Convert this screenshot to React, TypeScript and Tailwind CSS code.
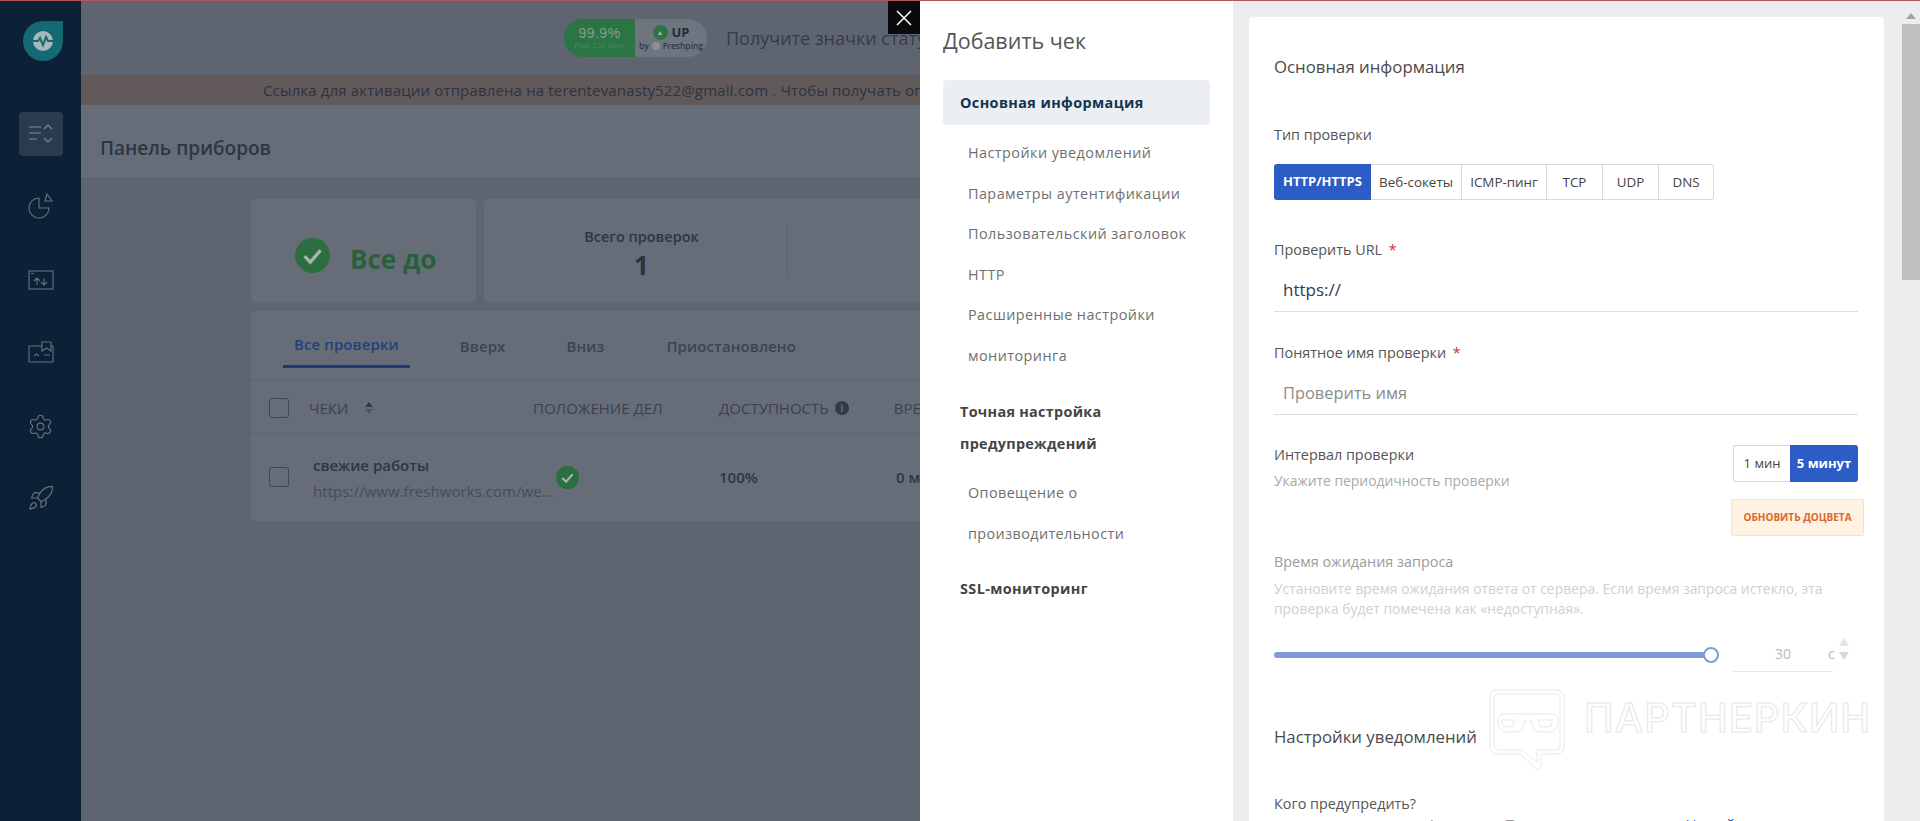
import { Rocket, Settings } from "lucide-react";

const navItems = [
  "Настройки уведомлений",
  "Параметры аутентификации",
  "Пользовательский заголовок",
  "HTTP",
];

const checkTypes = [
  { label: "Веб-сокеты", width: "w-[91px]" },
  { label: "ICMP-пинг", width: "w-[85px]" },
  { label: "TCP", width: "w-[56px]" },
  { label: "UDP", width: "w-[56px]" },
  { label: "DNS", width: "w-[55px]" },
];

const CheckMark = ({ size }: { size: number }) => (
  <svg width={size} height={size} viewBox="0 0 24 24">
    <circle cx="12" cy="12" r="12" fill="#2b6f40" />
    <path d="M6.5 12.5l4 4 7-8" fill="none" stroke="#a9b3b5" strokeWidth="2.2" />
  </svg>
);

const Sidebar = () => (
  <div className="flex h-full w-[81px] shrink-0 flex-col items-center bg-[#0d2136]">
    <div className="mt-[20px] ml-[5px] flex h-[40px] w-[40px] items-center justify-center rounded-full rounded-tr-[6px] bg-[#136a73]">
      <svg width="22" height="22" viewBox="0 0 22 22">
        <circle cx="11" cy="11" r="10" fill="#a9b6bc" />
        <path d="M0 11h6l2-3 3 7 3-8 2 4h6" fill="none" stroke="#136a73" strokeWidth="2" />
      </svg>
    </div>
    <div className="mt-[51px] flex h-[44px] w-[44px] items-center justify-center rounded-[4px] bg-[#2a3a4f]">
      <svg width="26" height="20" viewBox="0 0 26 20" fill="none" stroke="#7c8795" strokeWidth="1.2">
        <path d="M1 3h12M1 9h12M1 15h8M16 5l4-4 4 4M16 14l4 4 4-4" />
      </svg>
    </div>
    <svg className="mt-[37px]" width="26" height="26" viewBox="0 0 26 26" fill="none" stroke="#667283" strokeWidth="1.1">
      <path d="M11 5a10 10 0 1 0 10 10H11z" />
      <path d="M19 1l5 7h-7z" />
    </svg>
    <svg className="mt-[51px]" width="26" height="20" viewBox="0 0 26 20" fill="none" stroke="#667283" strokeWidth="1.1">
      <rect x="1" y="1" width="24" height="18" />
      <path d="M9 15V8M6 11l3-3 3 3M16 8v7M13 12l3 3 3-3M3 3.5h3" />
    </svg>
    <svg className="mt-[51px]" width="26" height="22" viewBox="0 0 26 22" fill="none" stroke="#667283" strokeWidth="1.1">
      <path d="M14 5H1v16h24V5h-2M14 1h9v9l-4.5-3L14 10z" />
      <path d="M6 15l2.500-2 2.500 2M16 14h6" />
    </svg>
    <Settings className="mt-[50px]" size={27} strokeWidth={1} color="#667283" />
    <Rocket className="mt-[44px]" size={28} strokeWidth={1} color="#667283" />
  </div>
);

const StatusBadge = () => (
  <div className="flex h-[38px] w-[143px] overflow-hidden rounded-full">
    <div className="flex w-[71px] flex-col items-center justify-center bg-[#2b7443]">
      <span className="font-['Liberation_Sans',sans-serif] text-[14px] leading-[15px] tracking-[0.5px] text-[#8d9a92]">99.9%</span>
      <span className="font-['Liberation_Sans',sans-serif] text-[8px] leading-[10px] text-[#4d8560]">Past 100 days</span>
    </div>
    <div className="flex flex-1 flex-col items-center justify-center bg-[#6f757f]">
      <div className="flex items-center gap-[4px]">
        <span className="flex h-[15px] w-[15px] items-center justify-center rounded-full bg-[#2b7443] text-[7px] leading-none text-[#a9b3b5]">▲</span>
        <span className="text-[13px] leading-[15px] font-bold text-[#232c3b]">UP</span>
      </div>
      <div className="flex items-center gap-[3px] text-[8.500px] leading-[11px] font-semibold text-[#2e3746]">
        <span>by</span>
        <span className="h-[8px] w-[8px] rounded-full bg-[#8a9098]" />
        <span>Freshping</span>
      </div>
    </div>
  </div>
);

const Dashboard = () => (
  <div className="flex h-full w-[839px] shrink-0 flex-col overflow-hidden bg-[#5e6570]">
    <div className="flex h-[74px] w-[1200px] items-center pl-[483px]">
      <StatusBadge />
      <span className="ml-[19px] text-[18px] whitespace-nowrap text-[#343c4b]">Получите значки статуса</span>
    </div>
    <div className="flex h-[30px] w-[1200px] items-center bg-[#62595b] pl-[182px] text-[15px] tracking-[0.15px] whitespace-nowrap text-[#2d3341]">
      Ссылка для активации отправлена на terentevanasty522@gmail.com . Чтобы получать оповещения
    </div>
    <div className="flex h-[74px] items-center border-b border-[#5b616c] bg-[#666d78] pt-[13px] pl-[19px] text-[19px] font-semibold text-[#2e3543]">
      Панель приборов
    </div>
    <div className="mt-[20px] flex h-[103px] gap-[8px] pl-[170px]">
      <div className="flex w-[225px] shrink-0 items-center gap-[20px] rounded-[4px] bg-[#666d78] pt-[9px] pl-[44px]">
        <CheckMark size={35} />
        <span className="mt-[7px] text-[26px] leading-none font-bold text-[#2a5f3b]">Все до</span>
      </div>
      <div className="flex w-[600px] shrink-0 items-center rounded-[4px] bg-[#666d78]">
        <div className="flex w-[303px] flex-col items-center pt-[7px] pl-[12px]">
          <span className="text-[14.500px] leading-[22px] font-semibold text-[#2e3543]">Всего проверок</span>
          <span className="text-[26px] leading-[34px] font-bold text-[#2a3140]">1</span>
        </div>
        <div className="h-[54px] w-px bg-[#5a616c]" />
      </div>
    </div>
    <div className="mt-[9px] ml-[170px] h-[210px] w-[800px] rounded-[4px] bg-[#666d78]">
      <div className="flex h-[70px] items-start border-b border-[#5c636e] pl-[32px] text-[15px] font-semibold tracking-[0.1px] text-[#3b4352]">
        <div className="mr-[50px] flex h-[57px] items-center border-b-[3px] border-[#1f3a73] px-[11px] pt-[13px] text-[#253f78]">Все проверки</div>
        <div className="mr-[61px] flex h-[57px] items-center pt-[13px]">Вверх</div>
        <div className="mr-[62px] flex h-[57px] items-center pt-[13px]">Вниз</div>
        <div className="flex h-[57px] items-center pt-[13px]">Приостановлено</div>
      </div>
      <div className="flex h-[53px] items-center border-b border-[#5c636e] pt-[2px] text-[15px] font-medium text-[#3a4150]">
        <div className="ml-[18px] h-[20px] w-[20px] rounded-[3px] border border-[#3f4653]" />
        <span className="ml-[20px] w-[56px]">ЧЕКИ</span>
        <svg width="8" height="14" viewBox="0 0 8 14">
          <path d="M4 1l4 5H0z" fill="#343b48" />
          <path d="M4 13l4-5H0z" fill="#4d5460" />
        </svg>
        <span className="ml-[160px] w-[186px]">ПОЛОЖЕНИЕ ДЕЛ</span>
        <span>ДОСТУПНОСТЬ</span>
        <span className="ml-[6px] flex h-[14px] w-[14px] items-center justify-center rounded-full bg-[#333a47] text-[10px] leading-none font-bold text-[#666d78]">i</span>
        <span className="ml-[45px]">ВРЕМЯ</span>
      </div>
      <div className="flex h-[86px] items-center">
        <div className="ml-[18px] h-[20px] w-[20px] rounded-[3px] border border-[#3f4653]" />
        <div className="ml-[24px] flex w-[243px] flex-col pt-[1px]">
          <span className="text-[15px] leading-[26px] font-semibold text-[#2e3543]">свежие работы</span>
          <span className="truncate text-[15px] leading-[26px] tracking-[0.05px] text-[#444c5a]">https://www.freshworks.com/website-monitoring/</span>
        </div>
        <CheckMark size={23} />
        <span className="ml-[140px] w-[177px] text-[15px] font-semibold text-[#2e3543]">100%</span>
        <span className="text-[15px] font-semibold text-[#2e3543]">0 мс</span>
      </div>
    </div>
  </div>
);

const CheckMenu = () => (
  <div className="relative h-full w-[313px] shrink-0 bg-white">
    <div className="pt-[24px] pl-[23px] text-[21.500px] leading-[32px] text-[#555555]">Добавить чек</div>
    <div className="mt-[23px] ml-[23px] flex h-[45px] w-[267px] items-center rounded-[4px] bg-[#ebeef2] pt-[1px] pl-[17px] text-[14.400px] font-bold tracking-[0.4px] text-[#12344d]">
      Основная информация
    </div>
    <div className="mt-[8px] pl-[48px] text-[14.400px] tracking-[0.45px] text-[#6f6f6f]">
      {navItems.map((item) => (
        <div key={item} className="h-[40.500px] leading-[40.500px]">
          {item}
        </div>
      ))}
      <div className="leading-[40.500px]">Расширенные настройки мониторинга</div>
    </div>
    <div className="mt-[20px] pl-[40px] text-[14.400px] leading-[32px] font-bold tracking-[0.3px] text-[#444444]">
      Точная настройка
      <br />
      предупреждений
    </div>
    <div className="mt-[12px] pl-[48px] text-[14.400px] leading-[41px] tracking-[0.4px] text-[#6f6f6f]">
      Оповещение о
      <br />
      производительности
    </div>
    <div className="mt-[19px] pl-[40px] text-[14.400px] leading-[32px] font-bold tracking-[0.4px] text-[#444444]">SSL-мониторинг</div>
  </div>
);

const Watermark = () => (
  <div className="pointer-events-none absolute top-[688px] left-[1489px] flex items-start">
    <svg width="76" height="82" viewBox="0 0 76 82" fill="none" stroke="#e9e9e9" strokeWidth="1">
      <path d="M8 1h60a7 7 0 0 1 7 7v50a7 7 0 0 1-7 7H52v13a3 3 0 0 1-5 2L32 65H8a7 7 0 0 1-7-7V8a7 7 0 0 1 7-7z" />
      <path d="M10 5h56a5 5 0 0 1 5 5v46a5 5 0 0 1-5 5H48v12L33 61H10a5 5 0 0 1-5-5V10a5 5 0 0 1 5-5z" />
      <path d="M12 25h52a5 5 0 0 1 5 5v4a9 9 0 0 1-9 9h-8a9 9 0 0 1-9-9v-2h-8v2a9 9 0 0 1-9 9h-8a9 9 0 0 1-9-9v-4a5 5 0 0 1 5-5z" />
      <path d="M13 31h12v3a4 4 0 0 1-4 4h-4a4 4 0 0 1-4-4zM50 31h13v3a4 4 0 0 1-4 4h-5a4 4 0 0 1-4-4z" />
    </svg>
    <span className="mt-[5px] ml-[19px] font-['Inter',sans-serif] text-[40px] leading-[48px] font-medium tracking-[1px] whitespace-nowrap text-transparent [-webkit-text-stroke:1px_#e6e6e6]">
      ПАРТНЕРКИН
    </span>
  </div>
);

const CheckForm = () => (
  <div className="ml-[16px] h-[804px] w-[635px] shrink-0 rounded-t-[4px] bg-white px-[25px] pt-[37px] text-[14.400px] text-[#555555]">
    <div className="text-[16.800px] leading-[26px] font-medium text-[#4a4a4a]">Основная информация</div>
    <div className="mt-[45px] leading-[20px]">Тип проверки</div>
    <div className="mt-[19px] flex h-[36px]">
      <div className="flex w-[97px] items-center justify-center rounded-l-[3px] bg-[#2c5cc5] text-[13px] font-bold text-white">HTTP/HTTPS</div>
      {checkTypes.map((type, i) => (
        <div
          key={type.label}
          className={`flex ${type.width} items-center justify-center border-y border-r border-[#d5dade] text-[13.400px] text-[#444444] ${i === checkTypes.length - 1 ? "rounded-r-[3px]" : ""}`}
        >
          {type.label}
        </div>
      ))}
    </div>
    <div className="mt-[40px] leading-[20px]">
      Проверить URL <span className="ml-[3px] text-[#d72d30]">*</span>
    </div>
    <div className="mt-[11px] h-[41px] w-[584px] border-b border-[#dcdfe2] pl-[9px] text-[17px] leading-[38px] text-[#2f3b4b]">https://</div>
    <div className="mt-[31px] leading-[20px]">
      Понятное имя проверки <span className="ml-[3px] text-[#d72d30]">*</span>
    </div>
    <div className="mt-[11px] h-[41px] w-[584px] border-b border-[#dcdfe2] pl-[9px] text-[16.400px] leading-[38px] text-[#8b8b8b]">Проверить имя</div>
    <div className="mt-[30px] flex w-[584px] justify-between">
      <div>
        <div className="leading-[20px]">Интервал проверки</div>
        <div className="mt-[6px] text-[13.900px] leading-[20px] text-[#a9a9a9]">Укажите периодичность проверки</div>
      </div>
      <div className="flex h-[37px] text-[13px]">
        <div className="flex w-[57px] items-center justify-center rounded-l-[3px] border border-r-0 border-[#d5dade] text-[#444444]">1 мин</div>
        <div className="flex w-[68px] items-center justify-center rounded-r-[3px] bg-[#2c5cc5] font-bold text-white">5 минут</div>
      </div>
    </div>
    <div className="mt-[8px] -mr-[5px] flex justify-end">
      <div className="flex h-[37px] w-[133px] items-center justify-center rounded-[2px] border border-[#fae0c0] bg-[#fff2e2] text-[10px] font-bold text-[#d9692b]">
        ОБНОВИТЬ ДОЦВЕТА
      </div>
    </div>
    <div className="mt-[16px] leading-[20px] text-[#9b9b9b]">Время ожидания запроса</div>
    <div className="mt-[7px] w-[584px] text-[13.900px] leading-[20px] text-[#d0d0d0]">
      Установите время ожидания ответа от сервера. Если время запроса истекло, эта проверка будет помечена как «недоступная».
    </div>
    <div className="mt-[17px] flex h-[36px] w-[584px] items-start">
      <div className="relative mt-[16px] h-[6px] w-[438px] rounded-full bg-[#7f9bd8]">
        <div className="absolute top-[-5px] right-[-7px] h-[16px] w-[16px] rounded-full border-2 border-[#7f9bd8] bg-white" />
      </div>
      <div className="ml-[21px] flex h-[36px] w-[100px] items-center border-b border-[#e8e8e8] text-[14px] text-[#b9b9b9]">
        <span className="ml-[42px]">30</span>
        <span className="ml-[37px]">с</span>
      </div>
      <div className="mt-[2px] ml-[6px] flex flex-col gap-[6px]">
        <div className="h-0 w-0 border-x-[5px] border-b-[8px] border-x-transparent border-b-[#e3e3e3]" />
        <div className="h-0 w-0 border-x-[5px] border-t-[8px] border-x-transparent border-t-[#d8d8d8]" />
      </div>
    </div>
    <div className="mt-[52px] text-[16.800px] leading-[26px] font-medium text-[#4a4a4a]">Настройки уведомлений</div>
    <div className="mt-[44px] leading-[20px]">Кого предупредить?</div>
    <div className="flex w-[584px] justify-between pr-[17px] pl-[153px] text-[15px] leading-[20px]">
      <span className="text-[#9b9b9b]">Анастасия Терентева</span>
      <span className="text-[#2c5cc5]">+ Новый пользователь</span>
    </div>
  </div>
);

const App = () => (
  <div className="relative h-[821px] w-[1920px] overflow-hidden border-t border-[#b5545c] font-['Open_Sans',sans-serif]">
    <div className="flex h-full">
      <Sidebar />
      <Dashboard />
      <CheckMenu />
      <div className="flex h-full flex-1 items-start bg-[#ecedef] pt-[16px]">
        <CheckForm />
        <div className="ml-[18px] flex h-full w-[18px] flex-col items-center">
          <div className="mt-[-4px] h-0 w-0 border-x-[5px] border-b-[6px] border-x-transparent border-b-[#a3a3a3]" />
          <div className="mt-[5px] h-[256px] w-[18px] bg-[#c1c1c1]" />
        </div>
      </div>
    </div>
    <button className="absolute top-0 left-[888px] flex h-[33px] w-[32px] items-center justify-center bg-[#0a0a0c]">
      <svg width="16" height="16" viewBox="0 0 16 16" stroke="white" strokeWidth="1.500">
        <path d="M1 1l14 14M15 1L1 15" />
      </svg>
    </button>
    <Watermark />
  </div>
);

export default App;
